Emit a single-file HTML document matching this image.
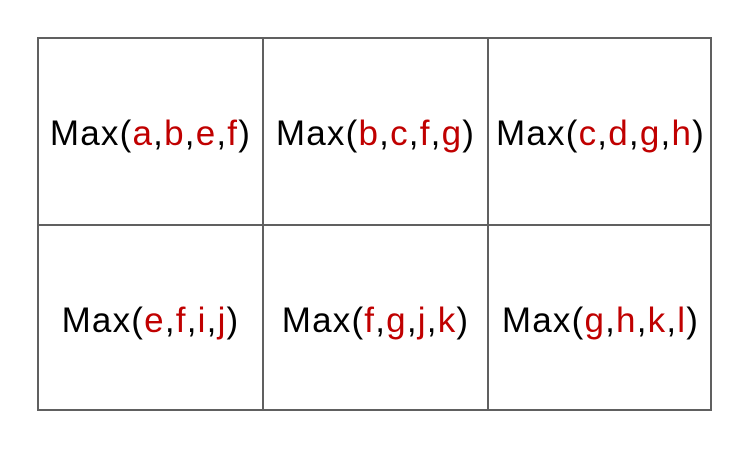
<!DOCTYPE html>
<html><head><style>
body{margin:0;width:750px;height:450px;background:#fff;position:relative;overflow:hidden;font-family:"Liberation Sans",sans-serif}
.l{position:absolute;background:#606060}
.t{position:absolute;width:225px;text-align:center;font-size:35px;line-height:40px;letter-spacing:1.2px;color:#000;white-space:nowrap}
.r{color:#c00000}
</style></head><body>
<div class="l" style="left:37px;top:37px;width:675px;height:2px"></div>
<div class="l" style="left:37px;top:409px;width:675px;height:2px"></div>
<div class="l" style="left:37px;top:224px;width:675px;height:2px"></div>
<div class="l" style="left:37px;top:37px;width:2px;height:374px"></div>
<div class="l" style="left:262px;top:37px;width:2px;height:374px"></div>
<div class="l" style="left:487px;top:37px;width:2px;height:374px"></div>
<div class="l" style="left:710px;top:37px;width:2px;height:374px"></div>

<div class="t" style="left:38px;top:114px">Max(<span class="r">a</span>,<span class="r">b</span>,<span class="r">e</span>,<span class="r">f</span>)</div>
<div class="t" style="left:263px;top:114px">Max(<span class="r">b</span>,<span class="r">c</span>,<span class="r">f</span>,<span class="r">g</span>)</div>
<div class="t" style="left:488px;top:114px">Max(<span class="r">c</span>,<span class="r">d</span>,<span class="r">g</span>,<span class="r">h</span>)</div>
<div class="t" style="left:38px;top:301px">Max(<span class="r">e</span>,<span class="r">f</span>,<span class="r">i</span>,<span class="r">j</span>)</div>
<div class="t" style="left:263px;top:301px">Max(<span class="r">f</span>,<span class="r">g</span>,<span class="r">j</span>,<span class="r">k</span>)</div>
<div class="t" style="left:488px;top:301px">Max(<span class="r">g</span>,<span class="r">h</span>,<span class="r">k</span>,<span class="r">l</span>)</div>
</body></html>
